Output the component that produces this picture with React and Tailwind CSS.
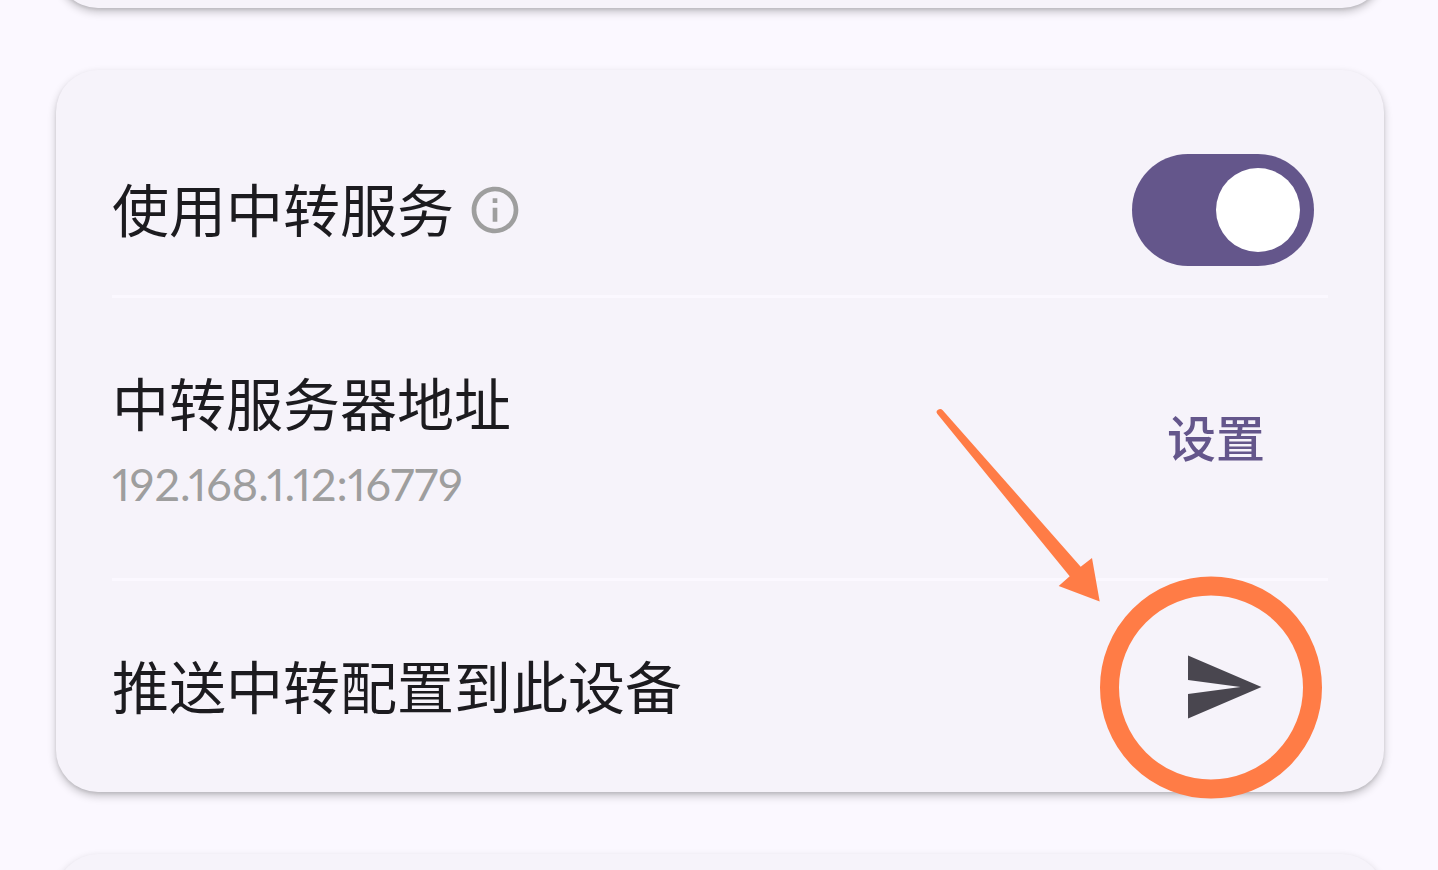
const TITLE = 'pb-1.5 text-[57px] leading-[74px] text-[#1c1b1f]';
const CARD =
  'shrink-0 rounded-[42px] bg-[#f6f3fa] px-14 shadow-[0_4px_8px_rgba(0,0,0,0.22),0_2px_3px_rgba(0,0,0,0.08)]';

function InfoIcon() {
  return (
    <svg viewBox="0 0 24 24" className="size-14" fill="#9e9e9e" aria-hidden="true">
      <path d="M11 7h2v2h-2zm0 4h2v6h-2zm1-9C6.48 2 2 6.48 2 12s4.48 10 10 10 10-4.48 10-10S17.52 2 12 2zm0 18c-4.41 0-8-3.59-8-8s3.59-8 8-8 8 3.59 8 8-3.59 8-8 8z" />
    </svg>
  );
}

function SendIcon() {
  return (
    <svg viewBox="0 0 24 24" className="size-[84px]" fill="#49464f" aria-hidden="true">
      <path d="M2.01 21L23 12 2.01 3 2 10l15 2-15 2z" />
    </svg>
  );
}

function Callout() {
  return (
    <svg
      viewBox="0 0 398 400"
      className="pointer-events-none absolute right-14 -bottom-[9px] h-[400px] w-[398px]"
      aria-hidden="true"
    >
      <path
        d="M7.2 12.8Q5.5 10.5 8 8.8Q10.5 7 12.7 9.2L150.7 165.7L162 157L169.7 200.5L128.7 185L139.7 175.3Z"
        fill="#ff7c46"
      />
      <circle cx="281" cy="286.5" r="101.5" fill="none" stroke="#ff7c46" strokeWidth="19" />
    </svg>
  );
}

export default function App() {
  return (
    <main className="flex h-screen flex-col gap-[62px] overflow-hidden bg-[#fbf8ff] pr-[54px] pl-14 font-['Noto_Sans_CJK_SC',sans-serif]">
      <section className={`${CARD} -mt-[112px] h-[120px]`} />

      <section className={`${CARD} relative pt-[84px]`}>
        <div className="flex items-center justify-between pr-3.5 pb-[29px]">
          <div className="flex items-center gap-[13px]">
            <label htmlFor="relay" className={TITLE}>
              使用中转服务
            </label>
            <button type="button" aria-label="说明">
              <InfoIcon />
            </button>
          </div>
          <input
            id="relay"
            type="checkbox"
            role="switch"
            defaultChecked
            className="flex h-28 w-[182px] cursor-pointer appearance-none items-center rounded-full bg-[#b8b4c2] px-3.5 before:size-[84px] before:rounded-full before:bg-white checked:justify-end checked:bg-[#64568b]"
          />
        </div>

        <div className="flex min-h-[286px] items-center justify-between border-y-[3px] border-[#fbf8ff] pr-[63px]">
          <div className="flex flex-col gap-3">
            <h2 className={TITLE}>中转服务器地址</h2>
            <p className="font-['Lato',sans-serif] text-[45px] leading-14 text-[#9e9e9e] proportional-nums">
              192.168.1.12:16779
            </p>
          </div>
          <button type="button" className="pb-1 text-[49px] leading-[80px] font-medium text-[#64568b]">
            设置
          </button>
        </div>

        <div className="flex min-h-[211px] items-center justify-between pr-[63px]">
          <h2 className={TITLE}>推送中转配置到此设备</h2>
          <button type="button" aria-label="推送">
            <SendIcon />
          </button>
        </div>

        <Callout />
      </section>

      <section className={`${CARD} h-[120px]`} />
    </main>
  );
}
